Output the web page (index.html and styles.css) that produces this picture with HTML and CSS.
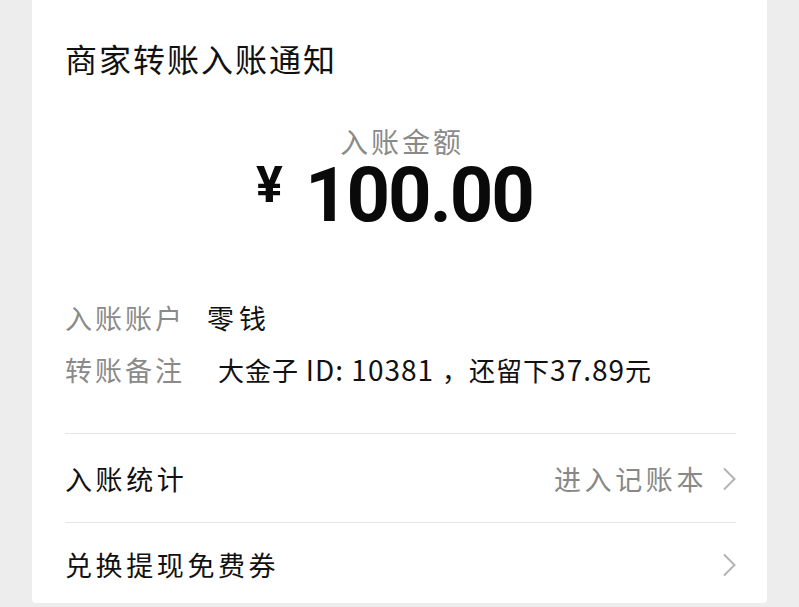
FILE: index.html
```html
<!DOCTYPE html>
<html lang="zh-CN">
<head>
<meta charset="utf-8">
<title>商家转账入账通知</title>
<link rel="stylesheet" href="styles.css">
</head>
<body>
<main class="card">
  <h1 class="title">商家转账入账通知</h1>
  <section class="amount-block">
    <div class="amount-label">入账金额</div>
    <div class="amount">
      <span class="currency">¥</span>
      <span class="value">100.00</span>
    </div>
  </section>
  <section class="info">
    <div class="info-row">
      <span class="info-key">入账账户</span>
      <span class="info-val">零钱</span>
    </div>
    <div class="info-row">
      <span class="info-key">转账备注</span>
      <span class="info-val info-val-note">大金子 <span class="lat">ID: 10381</span><span class="punct">，</span>还留下<span class="lat">37.89</span>元</span>
    </div>
  </section>
  <div class="list">
    <div class="list-row">
      <span class="list-title">入账统计</span>
      <span class="list-extra">进入记账本</span>
      <svg class="chevron" width="14" height="24" viewBox="0 0 14 24"><polyline points="2,1.5 12.5,12 2,22.5" fill="none" stroke="#b3b3b3" stroke-width="2"/></svg>
    </div>
    <div class="list-row list-row-last">
      <span class="list-title">兑换提现免费券</span>
      <span class="list-extra"></span>
      <svg class="chevron" width="14" height="24" viewBox="0 0 14 24"><polyline points="2,1.5 12.5,12 2,22.5" fill="none" stroke="#b3b3b3" stroke-width="2"/></svg>
    </div>
  </div>
</main>
</body>
</html>
```

FILE: styles.css
```css
* { box-sizing: border-box; }
html, body {
  margin: 0;
  padding: 0;
  background: #ededed;
}
body {
  font-family: "Noto Sans CJK SC", "Noto Sans", sans-serif;
  color: #111;
  height: 607px;
  overflow: hidden;
}
.card {
  margin: 0 32px;
  background: #fff;
  height: 603px;
  padding: 42px 31px 0 33px;
  border-radius: 0 0 4px 4px;
}
.title {
  margin: 0;
  font-size: 32px;
  line-height: 32px;
  font-weight: 400;
  letter-spacing: 2px;
  color: #111;
}
.amount-block {
  margin-top: 53px;
  display: flex;
  flex-direction: column;
  align-items: center;
}
.amount-label {
  font-size: 28px;
  line-height: 28px;
  color: #8a8a8a;
  letter-spacing: 3px;
  margin-left: 3px;
}
.amount {
  margin-top: 2px;
  display: flex;
  align-items: flex-start;
  font-family: Roboto, "Liberation Sans", sans-serif;
  font-weight: 700;
  color: #0a0a0a;
  margin-right: 12px;
}
.currency {
  font-size: 50px;
  line-height: 50px;
  margin-top: 3px;
  margin-right: 22px;
}
.value {
  font-size: 76px;
  line-height: 76px;
  letter-spacing: -2px;
}
.info {
  margin-top: 71px;
  display: flex;
  flex-direction: column;
  gap: 25px;
}
.info-row {
  display: flex;
  align-items: center;
  font-size: 27px;
  line-height: 27px;
}
.info-key {
  color: #8a8a8a;
  letter-spacing: 3px;
  width: 142px;
  flex: none;
}
.info-val {
  color: #111;
  letter-spacing: 5px;
}
.info-val-note {
  padding-left: 11px;
  font-size: 26px;
  letter-spacing: 1px;
  white-space: nowrap;
}
.lat {
  font-size: 28px;
  letter-spacing: 1px;
}
.punct {
  font-family: "Noto Sans CJK TC", "Noto Sans CJK SC", sans-serif;
  margin-left: 8px;
}
.list {
  margin-top: 50px;
}
.list-row {
  display: flex;
  align-items: center;
  border-top: 1px solid #e6e6e6;
  padding: 31px 0 30px;
  font-size: 27px;
  line-height: 27px;
}
.list-row-last {
  padding-top: 28px;
}
.list-title {
  flex: 1;
  letter-spacing: 3.6px;
  color: #111;
}
.list-extra {
  color: #888;
  letter-spacing: 3.6px;
  margin-right: 15px;
}
.chevron {
  flex: none;
  display: block;
}
```
